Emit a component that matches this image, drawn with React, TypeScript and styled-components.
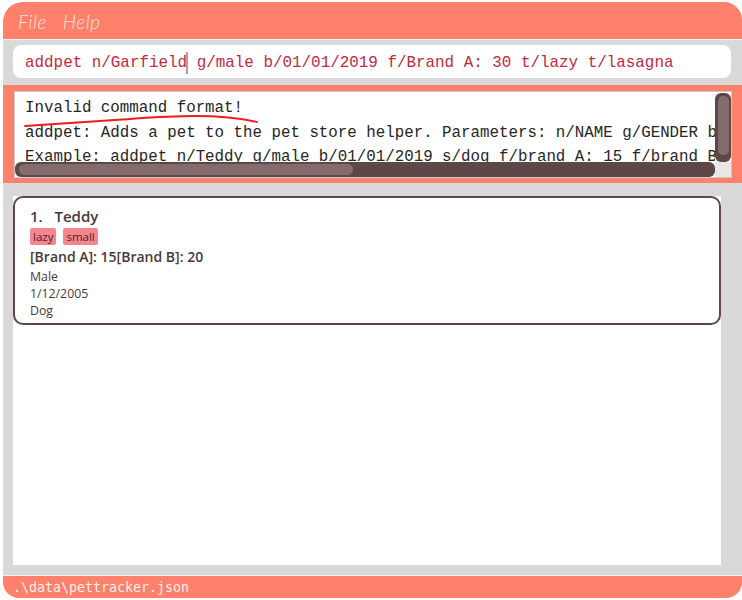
import React from "react";
import styled, { createGlobalStyle } from "styled-components";

const Global = createGlobalStyle`
  html, body { margin: 0; padding: 0; background: #ffffff; }
  body { font-family: "Open Sans", "Liberation Sans", sans-serif; }
  * { box-sizing: border-box; }
`;

const SALMON = "#ff806b";
const GRAY = "#d9d9d9";
const BROWN = "#5d4747";

const Window = styled.div`
  margin: 2px 0 0 3px;
  width: 739px;
  height: 596px;
  display: flex;
  flex-direction: column;
`;

const MenuBar = styled.div`
  height: 38px;
  background: ${SALMON};
  border-radius: 20px 18px 0 0;
  display: flex;
  align-items: center;
  gap: 16px;
  padding: 2px 0 0 15px;
  border-bottom: 1px solid #f4f4f4;
`;

const MenuItem = styled.span`
  font-family: "Lato", sans-serif;
  font-weight: 300;
  font-style: italic;
  font-size: 19px;
  color: #ffe3dc;
  letter-spacing: 0.5px;
`;

const CommandArea = styled.div`
  background: ${GRAY};
  padding: 5px 11px 7px 10px;
`;

const CommandBox = styled.div`
  background: #ffffff;
  border-radius: 8px;
  height: 33px;
  display: flex;
  align-items: center;
  padding: 2px 0 0 12px;
  font-family: "Liberation Mono", monospace;
  font-size: 15.9px;
  color: #c02a3f;
  white-space: pre;
`;

const Caret = styled.span`
  display: inline-block;
  width: 2px;
  height: 22px;
  background: #d98a98;
  vertical-align: middle;
  margin: 0 -1px 0 -1px;
`;

const ResultArea = styled.div`
  background: ${SALMON};
  padding: 6px 10px 5px 11px;
`;

const ResultBox = styled.div`
  position: relative;
  height: 87px;
  background: #ffffff;
  border: 1px solid #c9c9c9;
  display: grid;
  grid-template-columns: 1fr 16px;
  grid-template-rows: 1fr 15px;
`;

const ResultText = styled.div`
  overflow: hidden;
  padding: 4px 0 0 10px;
  font-family: "Liberation Mono", monospace;
  font-size: 15.8px;
  line-height: 24.5px;
  color: #262626;
  white-space: pre;
`;

const VBar = styled.div`
  background: ${BROWN};
  border-radius: 6px;
  padding: 3px 2px 7px 3px;
  margin: 1px 0 0 0;
  display: flex;
`;

const VThumb = styled.div`
  flex: 1;
  background: #846c6c;
  border-radius: 5px;
`;

const HBar = styled.div`
  background: ${BROWN};
  border-radius: 6px;
  padding: 2px 0 2px 4px;
  display: flex;
`;

const HThumb = styled.div`
  width: 334px;
  background: #846c6c;
  border-radius: 6px;
`;

const Corner = styled.div`
  background: #e8e8e8;
`;

const Squiggle = styled.svg`
  position: absolute;
  left: 0;
  top: 0;
  pointer-events: none;
`;

const ListArea = styled.div`
  flex: 1;
  background: ${GRAY};
  padding: 13px 21px 10px 10px;
  display: flex;
  border-bottom: 1px solid #f4f4f4;
`;

const ListView = styled.div`
  flex: 1;
  background: #ffffff;
`;

const Card = styled.div`
  border: 2px solid ${BROWN};
  border-radius: 10px;
  padding: 7px 14px 4px 15px;
  color: #47393a;
  display: flex;
  flex-direction: column;
`;

const Title = styled.div`
  font-size: 15px;
  font-weight: 600;
  line-height: 22px;
  white-space: pre;
  word-spacing: 2px;
`;

const Tags = styled.div`
  display: flex;
  gap: 7px;
  margin: 1px 0 1px 0;
`;

const Tag = styled.span`
  background: #f7848f;
  color: #3d2b2d;
  font-size: 11.5px;
  line-height: 17px;
  padding: 0 3px;
  border-radius: 2px;
`;

const Food = styled.div`
  font-size: 14px;
  font-weight: 600;
  line-height: 22px;
`;

const Detail = styled.div`
  font-size: 12.3px;
  line-height: 17px;
`;

const StatusBar = styled.div`
  height: 22px;
  background: ${SALMON};
  border-radius: 0 0 16px 16px;
  padding: 0 0 0 10px;
  display: flex;
  align-items: center;
  font-family: "DejaVu Sans Mono", monospace;
  font-size: 13.3px;
  color: #fff1ec;
  white-space: pre;
`;

export default function App() {
  return (
    <>
      <Global />
      <Window>
        <MenuBar>
          <MenuItem>File</MenuItem>
          <MenuItem>Help</MenuItem>
        </MenuBar>
        <CommandArea>
          <CommandBox>
            addpet n/Garfield<Caret /> g/male b/01/01/2019 f/Brand A: 30 t/lazy t/lasagna
          </CommandBox>
        </CommandArea>
        <ResultArea>
          <ResultBox>
            <ResultText>
              {"Invalid command format!\n"}
              {"addpet: Adds a pet to the pet store helper. Parameters: n/NAME g/GENDER b/DATE_OF_BIRTH s/SPECIES [f/FOOD]... [t/TAG]...\n"}
              {"Example: addpet n/Teddy g/male b/01/01/2019 s/dog f/brand A: 15 f/brand B: 20 t/lazy t/small"}
            </ResultText>
            <VBar>
              <VThumb />
            </VBar>
            <HBar>
              <HThumb />
            </HBar>
            <Corner />
            <Squiggle width="300" height="40">
              <path
                d="M10 34 C 40 32, 70 30, 100 28 C 130 26, 150 24, 180 24 C 205 24, 225 26, 242 30"
                stroke="#ee1c1c"
                strokeWidth="1.8"
                fill="none"
                strokeLinecap="round"
              />
            </Squiggle>
          </ResultBox>
        </ResultArea>
        <ListArea>
          <ListView>
            <Card>
              <Title>{"1.  Teddy"}</Title>
              <Tags>
                <Tag>lazy</Tag>
                <Tag>small</Tag>
              </Tags>
              <Food>[Brand A]: 15[Brand B]: 20</Food>
              <Detail>Male</Detail>
              <Detail>1/12/2005</Detail>
              <Detail>Dog</Detail>
            </Card>
          </ListView>
        </ListArea>
        <StatusBar>.\data\pettracker.json</StatusBar>
      </Window>
    </>
  );
}
